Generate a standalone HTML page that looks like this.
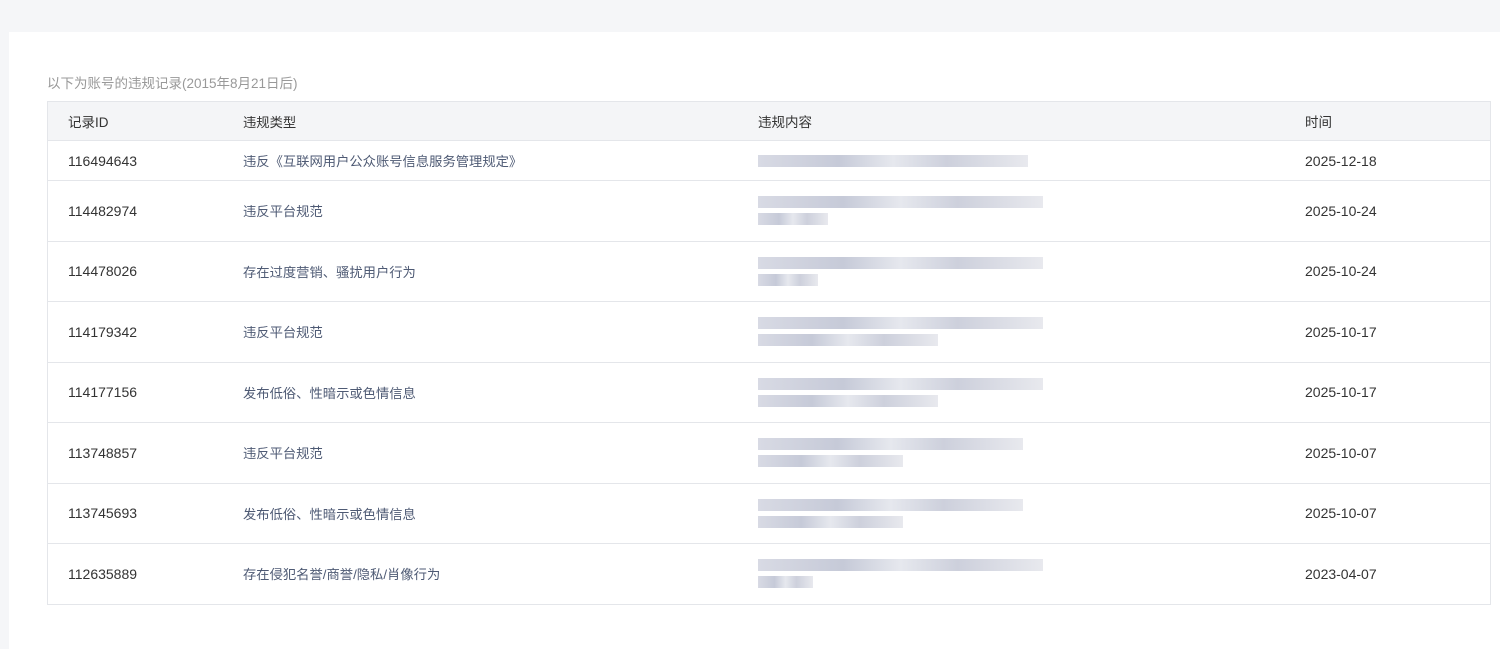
<!DOCTYPE html><html><head><meta charset="utf-8"><style>
body{margin:0;background:#f5f6f8;font-family:"Liberation Sans","Noto Sans CJK SC",sans-serif;width:1500px;height:649px;overflow:hidden}
.card{position:absolute;left:9px;top:32px;width:1491px;height:617px;background:#fff}
.note{position:absolute;left:47px;top:72px;font-size:13.5px;color:#999}
table{position:absolute;left:47px;top:101px;width:1444px;border-collapse:collapse;font-size:14px;color:#333}
th{background:#f4f5f7;font-weight:normal;text-align:left;height:38px;padding:0;border-top:1px solid #e4e6ea;border-bottom:1px solid #e4e6ea;font-size:13.5px}
td{padding:0;border-bottom:1px solid #e4e6ea;height:59.5px}
tr.f td{height:39px}
table{border-left:1px solid #e4e6ea;border-right:1px solid #e4e6ea}
.c1{padding-left:20px;width:175px}.c2{width:515px;color:#4e5a74;font-size:13.3px}.c3{width:547px}
.b{height:12px;background:linear-gradient(90deg,#d8dae4,#c6cad8 30%,#e6e8ee 50%,#cdd0dc 70%,#e8e9ee);margin:5px 0}
</style></head><body><div class="card"></div>
<div class="note">以下为账号的违规记录(2015年8月21日后)</div>
<table>
<tr><th class="c1">记录ID</th><th class="c2" style="color:#333">违规类型</th><th class="c3">违规内容</th><th>时间</th></tr>
<tr class="f"><td class="c1">116494643</td><td class="c2">违反《互联网用户公众账号信息服务管理规定》</td><td><div class="b" style="width:270px"></div></td><td>2025-12-18</td></tr>
<tr><td class="c1">114482974</td><td class="c2">违反平台规范</td><td><div class="b" style="width:285px"></div><div class="b" style="width:70px"></div></td><td>2025-10-24</td></tr>
<tr><td class="c1">114478026</td><td class="c2">存在过度营销、骚扰用户行为</td><td><div class="b" style="width:285px"></div><div class="b" style="width:60px"></div></td><td>2025-10-24</td></tr>
<tr><td class="c1">114179342</td><td class="c2">违反平台规范</td><td><div class="b" style="width:285px"></div><div class="b" style="width:180px"></div></td><td>2025-10-17</td></tr>
<tr><td class="c1">114177156</td><td class="c2">发布低俗、性暗示或色情信息</td><td><div class="b" style="width:285px"></div><div class="b" style="width:180px"></div></td><td>2025-10-17</td></tr>
<tr><td class="c1">113748857</td><td class="c2">违反平台规范</td><td><div class="b" style="width:265px"></div><div class="b" style="width:145px"></div></td><td>2025-10-07</td></tr>
<tr><td class="c1">113745693</td><td class="c2">发布低俗、性暗示或色情信息</td><td><div class="b" style="width:265px"></div><div class="b" style="width:145px"></div></td><td>2025-10-07</td></tr>
<tr><td class="c1">112635889</td><td class="c2">存在侵犯名誉/商誉/隐私/肖像行为</td><td><div class="b" style="width:285px"></div><div class="b" style="width:55px"></div></td><td>2023-04-07</td></tr>
</table></body></html>
